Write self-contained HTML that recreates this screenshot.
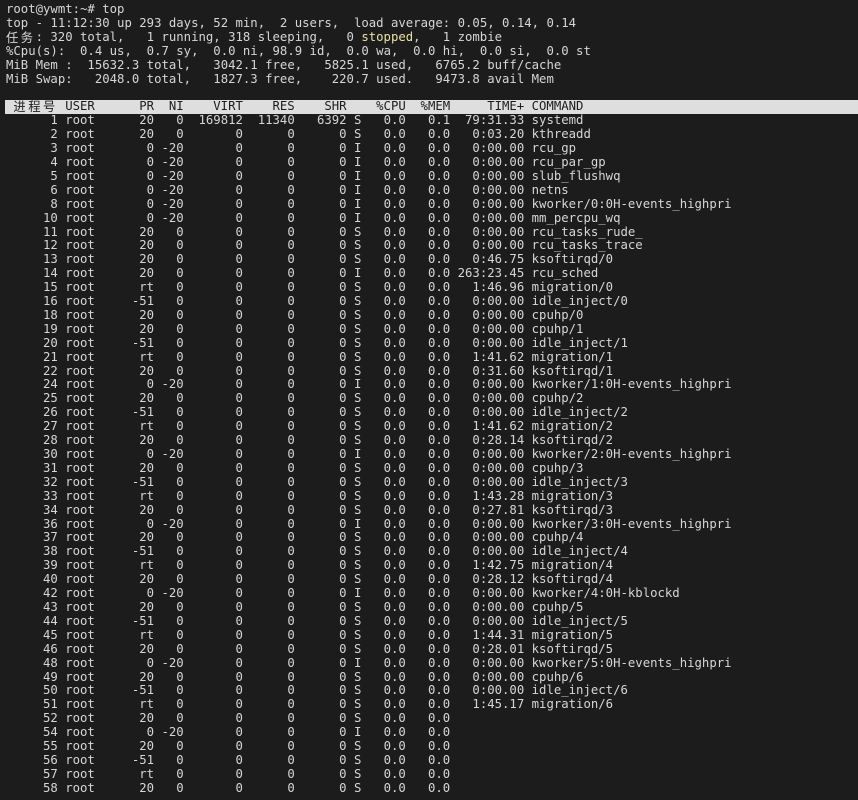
<!DOCTYPE html>
<html><head><meta charset="utf-8"><style>
html,body{margin:0;padding:0;background:#1c1c1c;width:858px;height:800px;overflow:hidden}
pre{margin:0;position:absolute;left:0;top:3px;width:852px;font-family:"DejaVu Sans Mono","Liberation Mono","Noto Sans CJK SC",monospace;font-size:12.3px;line-height:13.9px;color:#d6d6d6;padding-left:6px;white-space:pre;overflow:hidden}
.c{display:inline-block;width:14.8px;height:13.9px;vertical-align:top;font-family:"Noto Sans CJK SC",sans-serif;font-size:12.3px;line-height:13.9px}
.h{display:block;background:#dedede;color:#1c1c1c;margin-left:-1px;padding-left:1px}
.y{color:#e8e2a4}
</style></head><body>
<pre>root@ywmt:~# top
top - 11:12:30 up 293 days, 52 min,  2 users,  load average: 0.05, 0.14, 0.14
<span class="c">任</span><span class="c">务</span>: 320 total,   1 running, 318 sleeping,   0 <span class="y">stopped</span>,   1 zombie
%Cpu(s):  0.4 us,  0.7 sy,  0.0 ni, 98.9 id,  0.0 wa,  0.0 hi,  0.0 si,  0.0 st
MiB Mem :  15632.3 total,   3042.1 free,   5825.1 used,   6765.2 buff/cache
MiB Swap:   2048.0 total,   1827.3 free,    220.7 used.   9473.8 avail Mem

<span class="h"> <span class="c">进</span><span class="c">程</span><span class="c">号</span> USER      PR  NI    VIRT    RES    SHR    %CPU  %MEM     TIME+ COMMAND                                    </span>      1 root      20   0  169812  11340   6392 S   0.0   0.1  79:31.33 systemd
      2 root      20   0       0      0      0 S   0.0   0.0   0:03.20 kthreadd
      3 root       0 -20       0      0      0 I   0.0   0.0   0:00.00 rcu_gp
      4 root       0 -20       0      0      0 I   0.0   0.0   0:00.00 rcu_par_gp
      5 root       0 -20       0      0      0 I   0.0   0.0   0:00.00 slub_flushwq
      6 root       0 -20       0      0      0 I   0.0   0.0   0:00.00 netns
      8 root       0 -20       0      0      0 I   0.0   0.0   0:00.00 kworker/0:0H-events_highpri
     10 root       0 -20       0      0      0 I   0.0   0.0   0:00.00 mm_percpu_wq
     11 root      20   0       0      0      0 S   0.0   0.0   0:00.00 rcu_tasks_rude_
     12 root      20   0       0      0      0 S   0.0   0.0   0:00.00 rcu_tasks_trace
     13 root      20   0       0      0      0 S   0.0   0.0   0:46.75 ksoftirqd/0
     14 root      20   0       0      0      0 I   0.0   0.0 263:23.45 rcu_sched
     15 root      rt   0       0      0      0 S   0.0   0.0   1:46.96 migration/0
     16 root     -51   0       0      0      0 S   0.0   0.0   0:00.00 idle_inject/0
     18 root      20   0       0      0      0 S   0.0   0.0   0:00.00 cpuhp/0
     19 root      20   0       0      0      0 S   0.0   0.0   0:00.00 cpuhp/1
     20 root     -51   0       0      0      0 S   0.0   0.0   0:00.00 idle_inject/1
     21 root      rt   0       0      0      0 S   0.0   0.0   1:41.62 migration/1
     22 root      20   0       0      0      0 S   0.0   0.0   0:31.60 ksoftirqd/1
     24 root       0 -20       0      0      0 I   0.0   0.0   0:00.00 kworker/1:0H-events_highpri
     25 root      20   0       0      0      0 S   0.0   0.0   0:00.00 cpuhp/2
     26 root     -51   0       0      0      0 S   0.0   0.0   0:00.00 idle_inject/2
     27 root      rt   0       0      0      0 S   0.0   0.0   1:41.62 migration/2
     28 root      20   0       0      0      0 S   0.0   0.0   0:28.14 ksoftirqd/2
     30 root       0 -20       0      0      0 I   0.0   0.0   0:00.00 kworker/2:0H-events_highpri
     31 root      20   0       0      0      0 S   0.0   0.0   0:00.00 cpuhp/3
     32 root     -51   0       0      0      0 S   0.0   0.0   0:00.00 idle_inject/3
     33 root      rt   0       0      0      0 S   0.0   0.0   1:43.28 migration/3
     34 root      20   0       0      0      0 S   0.0   0.0   0:27.81 ksoftirqd/3
     36 root       0 -20       0      0      0 I   0.0   0.0   0:00.00 kworker/3:0H-events_highpri
     37 root      20   0       0      0      0 S   0.0   0.0   0:00.00 cpuhp/4
     38 root     -51   0       0      0      0 S   0.0   0.0   0:00.00 idle_inject/4
     39 root      rt   0       0      0      0 S   0.0   0.0   1:42.75 migration/4
     40 root      20   0       0      0      0 S   0.0   0.0   0:28.12 ksoftirqd/4
     42 root       0 -20       0      0      0 I   0.0   0.0   0:00.00 kworker/4:0H-kblockd
     43 root      20   0       0      0      0 S   0.0   0.0   0:00.00 cpuhp/5
     44 root     -51   0       0      0      0 S   0.0   0.0   0:00.00 idle_inject/5
     45 root      rt   0       0      0      0 S   0.0   0.0   1:44.31 migration/5
     46 root      20   0       0      0      0 S   0.0   0.0   0:28.01 ksoftirqd/5
     48 root       0 -20       0      0      0 I   0.0   0.0   0:00.00 kworker/5:0H-events_highpri
     49 root      20   0       0      0      0 S   0.0   0.0   0:00.00 cpuhp/6
     50 root     -51   0       0      0      0 S   0.0   0.0   0:00.00 idle_inject/6
     51 root      rt   0       0      0      0 S   0.0   0.0   1:45.17 migration/6
     52 root      20   0       0      0      0 S   0.0   0.0
     54 root       0 -20       0      0      0 I   0.0   0.0
     55 root      20   0       0      0      0 S   0.0   0.0
     56 root     -51   0       0      0      0 S   0.0   0.0
     57 root      rt   0       0      0      0 S   0.0   0.0
     58 root      20   0       0      0      0 S   0.0   0.0</pre>
</body></html>
